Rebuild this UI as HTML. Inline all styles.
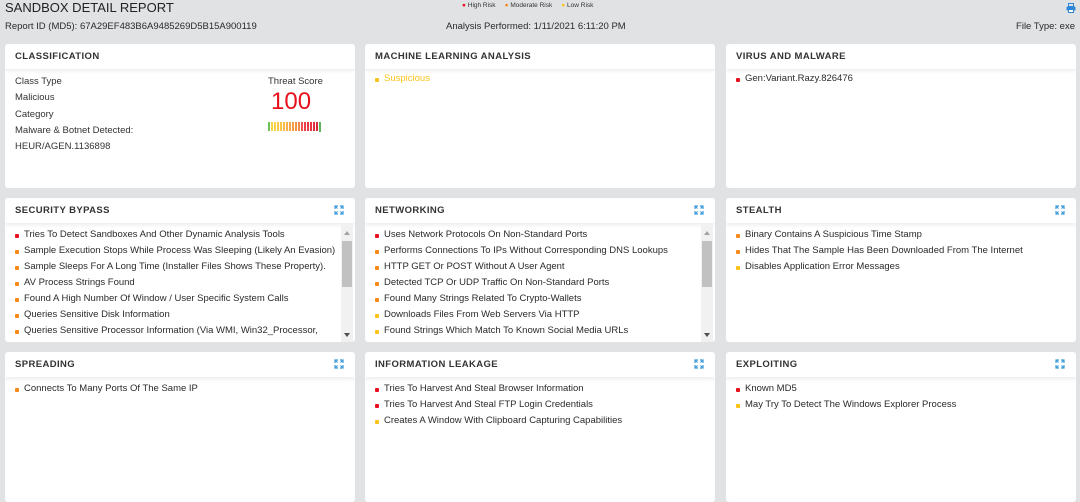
<!DOCTYPE html>
<html><head><meta charset="utf-8"><style>
*{box-sizing:border-box;margin:0;padding:0}
body{width:1080px;height:495px;overflow:hidden;background:#e1e2e4;font-family:"Liberation Sans",Arial,sans-serif;color:#333;position:relative}
.t{position:absolute;white-space:nowrap}
.panel{position:absolute;background:#fff;border-radius:3px;overflow:hidden;width:350px}
.ph{height:25px;padding-left:10px;font-weight:bold;font-size:9.5px;letter-spacing:0.4px;line-height:25px;color:#333;box-shadow:0 2px 4px rgba(0,0,0,0.08);position:relative}
.ph svg{position:absolute;right:11px;top:7px}
.list{position:absolute;left:0;top:26px;right:0;bottom:0;padding:3px 0 0 10px;font-size:9.5px;}
.list div{height:16px;line-height:16px;padding-left:9px;position:relative;white-space:nowrap;color:#2a2a2a}
.list div:before{content:"";position:absolute;left:0;top:7px;width:4px;height:4px;border-radius:1px;background:var(--c)}
.r{--c:#e8101c}.o{--c:#f7891c}.y{--c:#fbc21a}
.sb{position:absolute;right:2px;top:26px;width:12px;height:118px;background:#f1f1f1}
.sb .th{position:absolute;left:1px;right:1px;top:17px;height:46px;background:#c1c1c1}
.sb .u,.sb .d{position:absolute;left:3px;width:0;height:0;border-left:3px solid transparent;border-right:3px solid transparent}
.sb .u{top:7px;border-bottom:4px solid #a3a3a3}
.sb .d{bottom:5px;border-top:4px solid #505050}
</style></head><body>
<div class="t" style="left:5px;top:0px;font-size:13px;color:#222;">SANDBOX DETAIL REPORT</div>
<div class="t" style="left:5px;top:21px;font-size:9.5px;color:#2a2a2a;">Report ID (MD5): 67A29EF483B6A9485269D5B15A900119</div>
<div class="t" style="left:446px;top:21px;font-size:9.5px;color:#2a2a2a;">Analysis Performed: 1/11/2021 6:11:20 PM</div>
<div class="t" style="right:5px;top:21px;font-size:9.5px;color:#2a2a2a;">File Type: exe</div>
<div class="t" style="left:462px;top:2px;font-size:6.5px;color:#333;"><span style="color:#e8101c">●</span> High Risk &nbsp;&nbsp;&nbsp; <span style="color:#f7891c">●</span> Moderate Risk &nbsp;&nbsp;&nbsp; <span style="color:#fbc21a">●</span> Low Risk</div>
<svg class="t" style="left:1066px;top:3px" width="10" height="10" viewBox="0 0 10 10"><rect x="2.5" y="0.5" width="5" height="3" fill="none" stroke="#2e86d6"/><rect x="0.5" y="3.5" width="9" height="4" rx="1" fill="#2e86d6"/><rect x="2.5" y="6.5" width="5" height="3" fill="#fff" stroke="#2e86d6"/></svg>

<!-- Row 1 -->
<div class="panel" style="left:5px;top:44px;height:144px">
<div class="ph">CLASSIFICATION</div>
<div class="t" style="left:10px;top:32px;font-size:9.5px">Class Type</div>
<div class="t" style="left:10px;top:48px;font-size:9.5px">Malicious</div>
<div class="t" style="left:10px;top:65px;font-size:9.5px">Category</div>
<div class="t" style="left:10px;top:81px;font-size:9.5px">Malware &amp; Botnet Detected:</div>
<div class="t" style="left:10px;top:97px;font-size:9.5px">HEUR/AGEN.1136898</div>
<div class="t" style="left:263px;top:32px;font-size:9.5px">Threat Score</div>
<div class="t" style="left:266px;top:44px;font-size:24px;color:#e8101c">100</div>
<svg class="t" style="left:263px;top:78px" width="56" height="10">
<rect x="0" y="0" width="2" height="9" fill="#6cbf5a"/>
<rect x="3" y="0" width="2" height="9" fill="#f6d44a"/><rect x="6" y="0" width="2" height="9" fill="#f6d44a"/><rect x="9" y="0" width="2" height="9" fill="#f7cc48"/><rect x="12" y="0" width="2" height="9" fill="#f7c548"/><rect x="15" y="0" width="2" height="9" fill="#f7bd48"/><rect x="18" y="0" width="2" height="9" fill="#f6b048"/><rect x="21" y="0" width="2" height="9" fill="#f5a646"/><rect x="24" y="0" width="2" height="9" fill="#f39c46"/><rect x="27" y="0" width="2" height="9" fill="#f29444"/><rect x="30" y="0" width="2" height="9" fill="#f08a44"/><rect x="33" y="0" width="2" height="9" fill="#ee5050"/><rect x="36" y="0" width="2" height="9" fill="#ec4048"/><rect x="39" y="0" width="2" height="9" fill="#e83a44"/><rect x="42" y="0" width="2" height="9" fill="#e63440"/><rect x="45" y="0" width="2" height="9" fill="#e02c3c"/><rect x="48" y="0" width="2" height="9" fill="#d8283a"/><rect x="51" y="-1" width="2" height="11" fill="#5fb35a"/>
</svg>
</div>
<div class="panel" style="left:365px;top:44px;height:144px">
<div class="ph">MACHINE LEARNING ANALYSIS</div>
<div class="list" style="padding-top:1px"><div class="y" style="color:#fbc21a">Suspicious</div></div>
</div>
<div class="panel" style="left:726px;top:44px;height:144px">
<div class="ph">VIRUS AND MALWARE</div>
<div class="list" style="padding-top:1px"><div class="r">Gen:Variant.Razy.826476</div></div>
</div>

<!-- Row 2 -->
<div class="panel" style="left:5px;top:198px;height:144px">
<div class="ph">SECURITY BYPASS<svg width="10" height="10" viewBox="0 0 10 10" fill="none" stroke="#3a9ad9" stroke-width="1.2"><path d="M1 4V1h3M1 1l2.5 2.5M6 1h3v3M9 1L6.5 3.5M1 6v3h3M1 9l2.5-2.5M9 6v3H6M9 9L6.5 6.5"/></svg></div>
<div class="list" style="right:14px;overflow:hidden">
<div class="r">Tries To Detect Sandboxes And Other Dynamic Analysis Tools</div>
<div class="o">Sample Execution Stops While Process Was Sleeping (Likely An Evasion)</div>
<div class="o">Sample Sleeps For A Long Time (Installer Files Shows These Property).</div>
<div class="o">AV Process Strings Found</div>
<div class="o">Found A High Number Of Window / User Specific System Calls</div>
<div class="o">Queries Sensitive Disk Information</div>
<div class="o">Queries Sensitive Processor Information (Via WMI, Win32_Processor,</div>
<div style="padding-left:9px">Other Ways To Detect Virtual Machines)</div>
</div>
<div class="sb"><div class="u"></div><div class="th"></div><div class="d"></div></div>
</div>
<div class="panel" style="left:365px;top:198px;height:144px">
<div class="ph">NETWORKING<svg width="10" height="10" viewBox="0 0 10 10" fill="none" stroke="#3a9ad9" stroke-width="1.2"><path d="M1 4V1h3M1 1l2.5 2.5M6 1h3v3M9 1L6.5 3.5M1 6v3h3M1 9l2.5-2.5M9 6v3H6M9 9L6.5 6.5"/></svg></div>
<div class="list" style="right:14px;overflow:hidden">
<div class="r">Uses Network Protocols On Non-Standard Ports</div>
<div class="o">Performs Connections To IPs Without Corresponding DNS Lookups</div>
<div class="o">HTTP GET Or POST Without A User Agent</div>
<div class="o">Detected TCP Or UDP Traffic On Non-Standard Ports</div>
<div class="o">Found Many Strings Related To Crypto-Wallets</div>
<div class="y">Downloads Files From Web Servers Via HTTP</div>
<div class="y">Found Strings Which Match To Known Social Media URLs</div>
</div>
<div class="sb"><div class="u"></div><div class="th"></div><div class="d"></div></div>
</div>
<div class="panel" style="left:726px;top:198px;height:144px">
<div class="ph">STEALTH<svg width="10" height="10" viewBox="0 0 10 10" fill="none" stroke="#3a9ad9" stroke-width="1.2"><path d="M1 4V1h3M1 1l2.5 2.5M6 1h3v3M9 1L6.5 3.5M1 6v3h3M1 9l2.5-2.5M9 6v3H6M9 9L6.5 6.5"/></svg></div>
<div class="list">
<div class="o">Binary Contains A Suspicious Time Stamp</div>
<div class="o">Hides That The Sample Has Been Downloaded From The Internet</div>
<div class="y">Disables Application Error Messages</div>
</div>
</div>

<!-- Row 3 -->
<div class="panel" style="left:5px;top:352px;height:150px">
<div class="ph">SPREADING<svg width="10" height="10" viewBox="0 0 10 10" fill="none" stroke="#3a9ad9" stroke-width="1.2"><path d="M1 4V1h3M1 1l2.5 2.5M6 1h3v3M9 1L6.5 3.5M1 6v3h3M1 9l2.5-2.5M9 6v3H6M9 9L6.5 6.5"/></svg></div>
<div class="list"><div class="o">Connects To Many Ports Of The Same IP</div></div>
</div>
<div class="panel" style="left:365px;top:352px;height:150px">
<div class="ph">INFORMATION LEAKAGE<svg width="10" height="10" viewBox="0 0 10 10" fill="none" stroke="#3a9ad9" stroke-width="1.2"><path d="M1 4V1h3M1 1l2.5 2.5M6 1h3v3M9 1L6.5 3.5M1 6v3h3M1 9l2.5-2.5M9 6v3H6M9 9L6.5 6.5"/></svg></div>
<div class="list">
<div class="r">Tries To Harvest And Steal Browser Information</div>
<div class="r">Tries To Harvest And Steal FTP Login Credentials</div>
<div class="y">Creates A Window With Clipboard Capturing Capabilities</div>
</div>
</div>
<div class="panel" style="left:726px;top:352px;height:150px">
<div class="ph">EXPLOITING<svg width="10" height="10" viewBox="0 0 10 10" fill="none" stroke="#3a9ad9" stroke-width="1.2"><path d="M1 4V1h3M1 1l2.5 2.5M6 1h3v3M9 1L6.5 3.5M1 6v3h3M1 9l2.5-2.5M9 6v3H6M9 9L6.5 6.5"/></svg></div>
<div class="list">
<div class="r">Known MD5</div>
<div class="y">May Try To Detect The Windows Explorer Process</div>
</div>
</div>
</body></html>
